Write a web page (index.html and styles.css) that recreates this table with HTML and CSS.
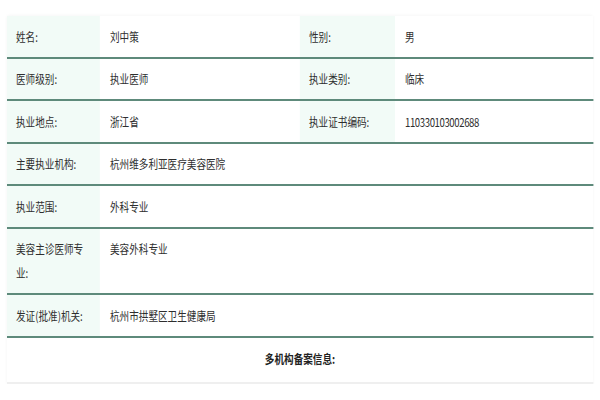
FILE: index.html
```html
<!DOCTYPE html>
<html lang="zh-CN">
<head>
<meta charset="utf-8">
<title>医师信息</title>
<link rel="stylesheet" href="styles.css">
</head>
<body>
<div class="page">
  <div class="sheet">
    <div class="row">
      <div class="label">姓名:</div>
      <div class="value">刘中策</div>
      <div class="label">性别:</div>
      <div class="value">男</div>
    </div>
    <div class="row">
      <div class="label">医师级别:</div>
      <div class="value">执业医师</div>
      <div class="label">执业类别:</div>
      <div class="value">临床</div>
    </div>
    <div class="row">
      <div class="label">执业地点:</div>
      <div class="value">浙江省</div>
      <div class="label">执业证书编码:</div>
      <div class="value num">110330103002688</div>
    </div>
    <div class="row">
      <div class="label">主要执业机构:</div>
      <div class="value wide">杭州维多利亚医疗美容医院</div>
    </div>
    <div class="row">
      <div class="label">执业范围:</div>
      <div class="value wide">外科专业</div>
    </div>
    <div class="row">
      <div class="label">美容主诊医师专业:</div>
      <div class="value wide">美容外科专业</div>
    </div>
    <div class="row">
      <div class="label">发证(批准)机关:</div>
      <div class="value wide">杭州市拱墅区卫生健康局</div>
    </div>
    <div class="title-row">多机构备案信息:</div>
  </div>
</div>
</body>
</html>
```
FILE: styles.css
```css
html, body {
  margin: 0;
  padding: 0;
  background: #ffffff;
  overflow: hidden;
}

.page {
  padding: 16px 7px 0;
  font-family: "Noto Sans CJK SC", "Noto Sans", sans-serif;
  font-size: 12px;
  color: #2e2e2e;
}

.sheet {
  width: 732.5px;
  transform: scaleX(0.8);
  transform-origin: 0 0;
  box-shadow: 0 0 4px rgba(0, 0, 0, 0.06);
}

.row {
  display: grid;
  grid-template-columns: 116.25px 250px 118.75px 1fr;
  border-bottom: 2px solid #5e8a7b;
}

.label,
.value {
  padding: 8.5px 11px 8px 11.25px;
  line-height: 24px;
}

.label {
  background: #f2fbf7;
}

.value {
  padding-left: 12.5px;
}

.num {
  letter-spacing: -0.5px;
}

.wide {
  grid-column: 2 / -1;
}

.title-row {
  height: 44px;
  line-height: 42px;
  text-align: center;
  font-weight: bold;
  color: #222222;
  border-bottom: 2px solid #efefef;
}
```
